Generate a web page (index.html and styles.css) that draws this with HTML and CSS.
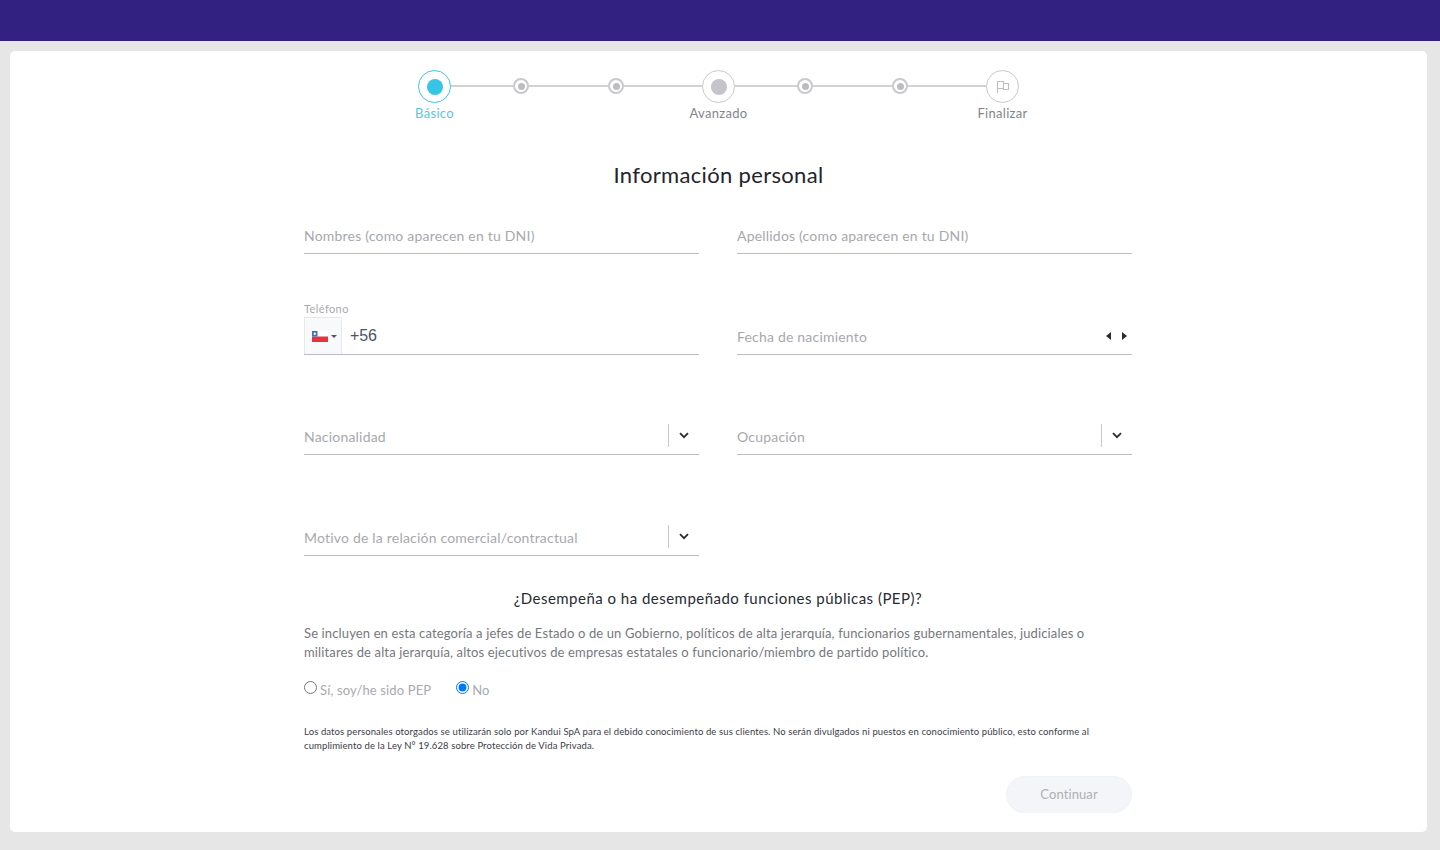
FILE: index.html
```html
<!DOCTYPE html>
<html lang="es">
<head>
<meta charset="utf-8">
<title>Información personal</title>
<link rel="stylesheet" href="styles.css">
</head>
<body>
<header class="topbar"></header>
<main class="card">
  <div class="stepper">
    <div class="step step-active"><span class="ring"><span class="dot"></span></span><span class="step-label">Básico</span></div>
    <span class="line l1"></span>
    <span class="mini"><span class="mini-dot"></span></span>
    <span class="line l2"></span>
    <span class="mini"><span class="mini-dot"></span></span>
    <span class="line l3"></span>
    <div class="step"><span class="ring"><span class="dot"></span></span><span class="step-label">Avanzado</span></div>
    <span class="line l1"></span>
    <span class="mini"><span class="mini-dot"></span></span>
    <span class="line l2"></span>
    <span class="mini"><span class="mini-dot"></span></span>
    <span class="line l3"></span>
    <div class="step"><span class="ring"><svg class="flag-icon" viewBox="0 0 14 14" width="14" height="14"><path d="M1.5 13V1.5H7.5V8.5H1.5M7.5 3.5H12.5V9.5H7.5V8.5" fill="none" stroke="#bdbdc2" stroke-width="1.1"/></svg></span><span class="step-label">Finalizar</span></div>
  </div>

  <h1 class="title">Información personal</h1>

  <form class="form">
    <div class="grid">
      <div class="field"><span class="placeholder">Nombres (como aparecen en tu DNI)</span></div>
      <div class="field"><span class="placeholder">Apellidos (como aparecen en tu DNI)</span></div>

      <div class="field field-phone">
        <span class="small-label">Teléfono</span>
        <div class="phone-row">
          <span class="flag-box">
            <svg class="cl-flag" viewBox="0 0 16 11" width="16" height="11"><rect width="16" height="11" fill="#fff"/><rect y="5.5" width="16" height="5.5" fill="#e5333f"/><rect width="5.5" height="5.5" fill="#3b6fc4"/><circle cx="2.75" cy="2.75" r="1.2" fill="#fff"/></svg>
            <span class="caret"></span>
          </span>
          <span class="phone-code">+56</span>
        </div>
      </div>
      <div class="field"><span class="placeholder">Fecha de nacimiento</span><span class="arrows"><span class="arrow-l"></span><span class="arrow-r"></span></span></div>

      <div class="field"><span class="placeholder">Nacionalidad</span><span class="select-btn"><svg viewBox="0 0 10 7" width="10" height="7"><path d="M1 1.2L5 5.2L9 1.2" fill="none" stroke="#2c2c34" stroke-width="1.8"/></svg></span></div>
      <div class="field"><span class="placeholder">Ocupación</span><span class="select-btn"><svg viewBox="0 0 10 7" width="10" height="7"><path d="M1 1.2L5 5.2L9 1.2" fill="none" stroke="#2c2c34" stroke-width="1.8"/></svg></span></div>

      <div class="field"><span class="placeholder">Motivo de la relación comercial/contractual</span><span class="select-btn"><svg viewBox="0 0 10 7" width="10" height="7"><path d="M1 1.2L5 5.2L9 1.2" fill="none" stroke="#2c2c34" stroke-width="1.8"/></svg></span></div>
    </div>

    <h2 class="pep-title">¿Desempeña o ha desempeñado funciones públicas (PEP)?</h2>
    <p class="pep-text">Se incluyen en esta categoría a jefes de Estado o de un Gobierno, políticos de alta jerarquía, funcionarios gubernamentales, judiciales o militares de alta jerarquía, altos ejecutivos de empresas estatales o funcionario/miembro de partido político.</p>

    <div class="radios">
      <label class="radio"><input type="radio" name="pep"><span>Sí, soy/he sido PEP</span></label>
      <label class="radio"><input type="radio" name="pep" checked><span>No</span></label>
    </div>

    <p class="legal">Los datos personales otorgados se utilizarán solo por Kandui SpA para el debido conocimiento de sus clientes. No serán divulgados ni puestos en conocimiento público, esto conforme al cumplimiento de la Ley N° 19.628 sobre Protección de Vida Privada.</p>

    <div class="actions"><button type="button" class="continue">Continuar</button></div>
  </form>
</main>
</body>
</html>
```
FILE: styles.css
```css
* { box-sizing: border-box; }
html, body { height: 100%; }
body {
  margin: 0;
  height: 850px;
  overflow: hidden;
  background: #e6e6e6;
  font-family: "Lato", "Noto Sans", sans-serif;
  color: #2a2a33;
}
.topbar { height: 41px; background: #322181; }
.card {
  width: 1417px;
  height: 781px;
  margin: 10px 0 0 10px;
  background: #fff;
  border-radius: 5px;
  padding-top: 19px;
}
.stepper {
  display: flex;
  align-items: flex-start;
  margin-left: 408px;
  height: 55px;
}
.step { display: flex; flex-direction: column; align-items: center; width: 33px; }
.ring {
  width: 33px; height: 33px; border-radius: 50%;
  border: 1.5px solid #c9c9cd;
  display: flex; align-items: center; justify-content: center;
  flex: none;
}
.dot { width: 16px; height: 16px; border-radius: 50%; background: #c4c4ca; }
.step-active .ring { border-color: #3ec6e4; }
.step-active .dot { background: #37c5e6; }
.step-label {
  margin-top: 2px; font-size: 13px; line-height: 17px; color: #85858b;
  white-space: nowrap; letter-spacing: 0.3px;
}
.step-active .step-label { color: #58c6e2; }
.line { height: 2px; background: #d2d2d5; margin-top: 15px; flex: none; }
.l1 { width: 62px; }
.l2 { width: 79px; }
.l3 { width: 78px; }
.mini {
  width: 16px; height: 16px; margin-top: 8px; border-radius: 50%;
  border: 2px solid #c9c9cd; flex: none;
  display: flex; align-items: center; justify-content: center;
}
.mini-dot { width: 7px; height: 7px; border-radius: 50%; background: #bcbcc2; }
.title {
  margin: 34px 0 0 0; text-align: center; font-weight: 400;
  font-size: 22px; line-height: 32px; color: #24242c; letter-spacing: 0.33px;
}
.form { width: 828px; margin: 0 0 0 294px; }
.grid {
  display: grid;
  grid-template-columns: 395px 395px;
  column-gap: 38px;
  grid-auto-rows: 37px;
  row-gap: 63.5px;
  margin-top: 26px;
}
.field {
  position: relative;
  display: flex; align-items: center;
  height: 37px;
  border-bottom: 1px solid #bdbdc1;
  padding-top: 1px;
}
.placeholder { font-size: 14px; color: #a8a8ad; letter-spacing: 0.2px; white-space: nowrap; }
.field-phone { display: block; padding: 0; }
.small-label {
  position: absolute; left: 0; top: -16px;
  font-size: 11px; line-height: 14px; color: #a9a9ae; letter-spacing: 0.4px;
}
.phone-row { display: flex; align-items: center; height: 36px; }
.flag-box {
  width: 38px; height: 37px; background: #f8f9fa;
  border: 1px solid #e8e8ea; border-bottom: 0;
  display: flex; align-items: center; padding-left: 7px; gap: 3px; flex: none;
}
.caret { width: 0; height: 0; border: 3px solid transparent; border-top: 3.5px solid #55555c; border-bottom: 0; }
.phone-code { margin-left: 8px; font-family: "Liberation Sans", sans-serif; font-size: 16px; color: #4a5568; letter-spacing: -0.1px; }
.arrows { margin-left: auto; margin-right: 5px; display: flex; gap: 11px; }
.arrow-l, .arrow-r { width: 0; height: 0; border: 4px solid transparent; border-left-width: 0; border-right: 5px solid #2c2c34; }
.arrow-r { border-right: 0; border-left: 5px solid #2c2c34; border-left-width: 5px; border-right-width: 0; }
.select-btn {
  position: absolute; right: 0; top: 6px; width: 31px; height: 23px;
  border-left: 1px solid #c9c9cd;
  display: flex; align-items: center; justify-content: center;
}
.pep-title {
  margin: 32px 0 0; text-align: center; font-weight: 400; font-size: 15px;
  line-height: 20px; color: #2a2a33; letter-spacing: 0.48px;
}
.pep-text {
  margin: 16px 0 0; font-size: 13px; line-height: 19px; color: #77777e; letter-spacing: 0.13px;
}
.radios { display: flex; gap: 25px; margin-top: 18px; height: 20px; }
.radio { display: flex; align-items: flex-start; gap: 3px; font-size: 13px; color: #a9a9ae; letter-spacing: 0.14px; }
.radio input { margin: 1px 0 0; width: 13px; height: 13px; }
.radio span { margin-top: 2px; }
.legal {
  margin: 25px 0 0; font-size: 9.5px; line-height: 14px; color: #3c3c46; width: 800px; letter-spacing: 0.11px;
}
.actions { display: flex; justify-content: flex-end; margin-top: 23px; }
.continue {
  width: 126px; height: 37px; border-radius: 19px;
  border: 1px solid #f0f2f5; background: #f3f5f8; color: #b0b0b5;
  font: 400 13px "Lato", sans-serif; letter-spacing: 0.1px;
}
```
